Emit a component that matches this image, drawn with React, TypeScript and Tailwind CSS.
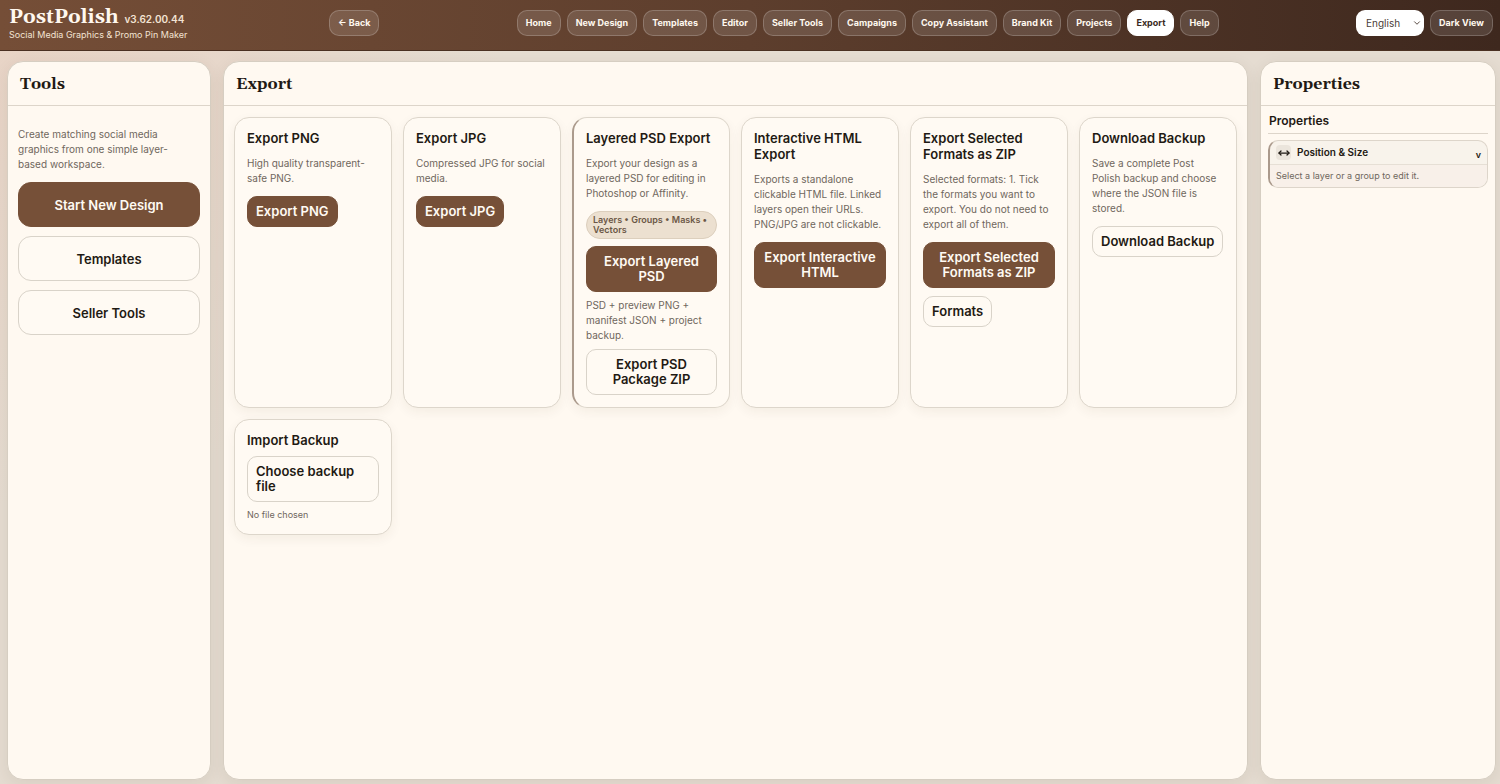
import type { ReactNode } from "react"
import { ChevronDown, MoveHorizontal } from "lucide-react"
import clsx from "clsx"

const navItems = [
  "Home",
  "New Design",
  "Templates",
  "Editor",
  "Seller Tools",
  "Campaigns",
  "Copy Assistant",
  "Brand Kit",
  "Projects",
  "Export",
  "Help",
]

interface ButtonProps {
  children: ReactNode
  primary?: boolean
  className?: string
}

function HeaderButton({ children, active }: { children: ReactNode; active?: boolean }) {
  return (
    <button
      type="button"
      className={clsx(
        "h-[26px] whitespace-nowrap rounded-[10px] border px-2 text-[9px] leading-3 font-bold",
        active ? "border-white bg-white text-[#3a2a22]" : "border-white/20 bg-white/12 text-[#fff8ef]"
      )}
    >
      {children}
    </button>
  )
}

function CardButton({ children, primary, className }: ButtonProps) {
  return (
    <button
      type="button"
      className={clsx(
        "rounded-[10px] border px-2 py-[7px] text-[13px] leading-[15px] font-semibold",
        primary ? "border-[#765038] bg-[#765038] text-[#fffaf3]" : "border-[#d9d3c9] bg-[#fffaf3] text-[#1f1a14]",
        className
      )}
    >
      {children}
    </button>
  )
}

function ToolButton({ children, primary }: ButtonProps) {
  return (
    <button
      type="button"
      className={clsx(
        "h-[45px] rounded-[13px] border text-[13px] leading-4 font-semibold",
        primary ? "border-[#765038] bg-[#765038] text-[#fffaf3]" : "border-[#d9d3c9] bg-[#fffaf3] text-[#1f1a14]"
      )}
    >
      {children}
    </button>
  )
}

function Panel({ title, children }: { title: string; children: ReactNode }) {
  return (
    <section className="flex min-w-0 flex-col rounded-2xl border border-[#d6cec2] bg-[#fff9f1] shadow-[0_4px_16px_rgba(70,45,25,0.08)]">
      <h2 className="h-[44px] border-b border-[#ddd5ca] px-3 font-[Georgia,Gelasio,'Liberation_Serif',serif] text-[16px] leading-[45px] font-bold text-[#1f1a14]">
        {title}
      </h2>
      {children}
    </section>
  )
}

function Card({ title, children, accent }: { title: string; children: ReactNode; accent?: boolean }) {
  return (
    <article
      className={clsx(
        "flex flex-col items-start rounded-[15px] border border-[#ddd6cb] bg-[#fffaf3] p-3 shadow-[0_4px_12px_rgba(70,45,25,0.06)]",
        accent && "border-l-2 border-l-[#ab9a8c]"
      )}
    >
      <h3 className="text-[13px] leading-4 font-semibold text-[#1f1a14]">{title}</h3>
      {children}
    </article>
  )
}

function CardText({ children, className }: { children: ReactNode; className: string }) {
  return <p className={clsx("text-[10px] leading-[15px] text-[#6f675d]", className)}>{children}</p>
}

export default function App() {
  return (
    <div className="flex min-h-screen flex-col bg-[#e5dcd1] bg-[radial-gradient(circle_at_top_left,#e8d3c5,transparent_30%)] font-[Inter,sans-serif]">
      <header className="flex h-[51px] items-start border-b border-[#4a3022] bg-linear-to-r from-[#754e37] via-[#5d3e2d] to-[#3e281e] pr-[7px] pl-[9px]">
        <div className="w-[320px] shrink-0 pt-[6px] text-[#fff8ef]">
          <div className="flex items-baseline gap-[6px]">
            <h1 className="font-[Georgia,Gelasio,'Liberation_Serif',serif] text-[20px] leading-[22px] font-bold">PostPolish</h1>
            <span className="text-[10px] font-semibold text-[#f3e3d3]">v3.62.00.44</span>
          </div>
          <p className="text-[9px] leading-[13px] text-[#f3e3d3]">Social Media Graphics &amp; Promo Pin Maker</p>
        </div>
        <div className="flex flex-1 items-start pt-[10px]">
          <HeaderButton>← Back</HeaderButton>
          <nav className="flex flex-1 justify-center gap-[6px]">
            {navItems.map((item) => (
              <HeaderButton key={item} active={item === "Export"}>
                {item}
              </HeaderButton>
            ))}
          </nav>
          <div className="flex gap-[6px]">
            <div className="relative">
              <select
                aria-label="Language"
                className="block h-[26px] w-[68px] appearance-none rounded-[9px] bg-white pl-[10px] text-[10px] text-[#4a4039]"
              >
                <option>English</option>
              </select>
              <ChevronDown className="pointer-events-none absolute top-2 right-[2px] h-[10px] w-[10px] text-[#3a2a22]" />
            </div>
            <HeaderButton>Dark View</HeaderButton>
          </div>
        </div>
      </header>

      <main className="grid flex-1 grid-cols-[204px_1fr_236px] gap-3 pt-[10px] pr-1 pb-1 pl-[7px]">
        <Panel title="Tools">
          <div className="flex flex-col gap-[9px] px-[10px] pt-[21px]">
            <p className="pr-4 pb-px text-[10px] leading-[15px] text-[#6f675d]">
              Create matching social media graphics from one simple layer-based workspace.
            </p>
            <ToolButton primary>Start New Design</ToolButton>
            <ToolButton>Templates</ToolButton>
            <ToolButton>Seller Tools</ToolButton>
          </div>
        </Panel>

        <Panel title="Export">
          <div className="grid grid-cols-6 gap-[11px] px-[10px] py-[11px]">
            <Card title="Export PNG">
              <CardText className="my-[10px]">High quality transparent-safe PNG.</CardText>
              <CardButton primary>Export PNG</CardButton>
            </Card>
            <Card title="Export JPG">
              <CardText className="my-[10px]">Compressed JPG for social media.</CardText>
              <CardButton primary>Export JPG</CardButton>
            </Card>
            <Card title="Layered PSD Export" accent>
              <CardText className="my-[10px]">
                Export your design as a layered PSD for editing in Photoshop or Affinity.
              </CardText>
              <span className="mb-[7px] w-full rounded-full border border-[#dccfbd] bg-[#ece0d0] px-[6px] py-[3px] text-[9px] leading-[10px] font-semibold text-[#6b5746]">
                Layers • Groups • Masks • Vectors
              </span>
              <CardButton primary className="w-full px-4">
                Export Layered PSD
              </CardButton>
              <CardText className="my-[6px]">PSD + preview PNG + manifest JSON + project backup.</CardText>
              <CardButton className="w-full">Export PSD Package ZIP</CardButton>
            </Card>
            <Card title="Interactive HTML Export">
              <CardText className="my-[10px]">
                Exports a standalone clickable HTML file. Linked layers open their URLs. PNG/JPG are not clickable.
              </CardText>
              <CardButton primary>Export Interactive HTML</CardButton>
            </Card>
            <Card title="Export Selected Formats as ZIP">
              <CardText className="my-[10px]">
                Selected formats: 1. Tick the formats you want to export. You do not need to export all of them.
              </CardText>
              <CardButton primary className="mb-2">
                Export Selected Formats as ZIP
              </CardButton>
              <CardButton>Formats</CardButton>
            </Card>
            <Card title="Download Backup">
              <CardText className="my-[10px]">
                Save a complete Post Polish backup and choose where the JSON file is stored.
              </CardText>
              <CardButton className="whitespace-nowrap">Download Backup</CardButton>
            </Card>
            <Card title="Import Backup">
              <label
                htmlFor="backup-file"
                className="mt-2 mb-[6px] w-full cursor-pointer rounded-[10px] border border-[#d9d3c9] bg-[#fffaf3] px-2 py-[7px] text-[13px] leading-[15px] font-semibold text-[#1f1a14]"
              >
                Choose backup file
              </label>
              <input id="backup-file" type="file" className="hidden" />
              <p className="text-[9px] leading-[14px] text-[#6f675d]">No file chosen</p>
            </Card>
          </div>
        </Panel>

        <Panel title="Properties">
          <div className="px-[7px] pt-[3px]">
            <h3 className="mb-[6px] border-b border-[#ddd5ca] pl-px text-[12px] leading-6 font-semibold text-[#1f1a14]">
              Properties
            </h3>
            <div className="overflow-hidden rounded-[10px] border border-l-2 border-[#ddd5ca] border-l-[#ab9a8c] bg-[#f8f3eb]">
              <button
                type="button"
                className="flex h-6 w-full items-center border-b border-[#e6dfd5] px-[6px] text-[10px] font-semibold text-[#1f1a14]"
              >
                <span className="flex h-[15px] w-[15px] items-center justify-center rounded-[4px] bg-[#ebe5dc]">
                  <MoveHorizontal className="h-3 w-3" strokeWidth={2.5} />
                </span>
                <span className="ml-[6px]">Position &amp; Size</span>
                <span className="ml-auto pt-1 text-[9px]">v</span>
              </button>
              <p className="bg-[#f8f0e9] px-[6px] py-1 text-[9px] leading-[14px] text-[#6f675d]">
                Select a layer or a group to edit it.
              </p>
            </div>
          </div>
        </Panel>
      </main>
    </div>
  )
}
